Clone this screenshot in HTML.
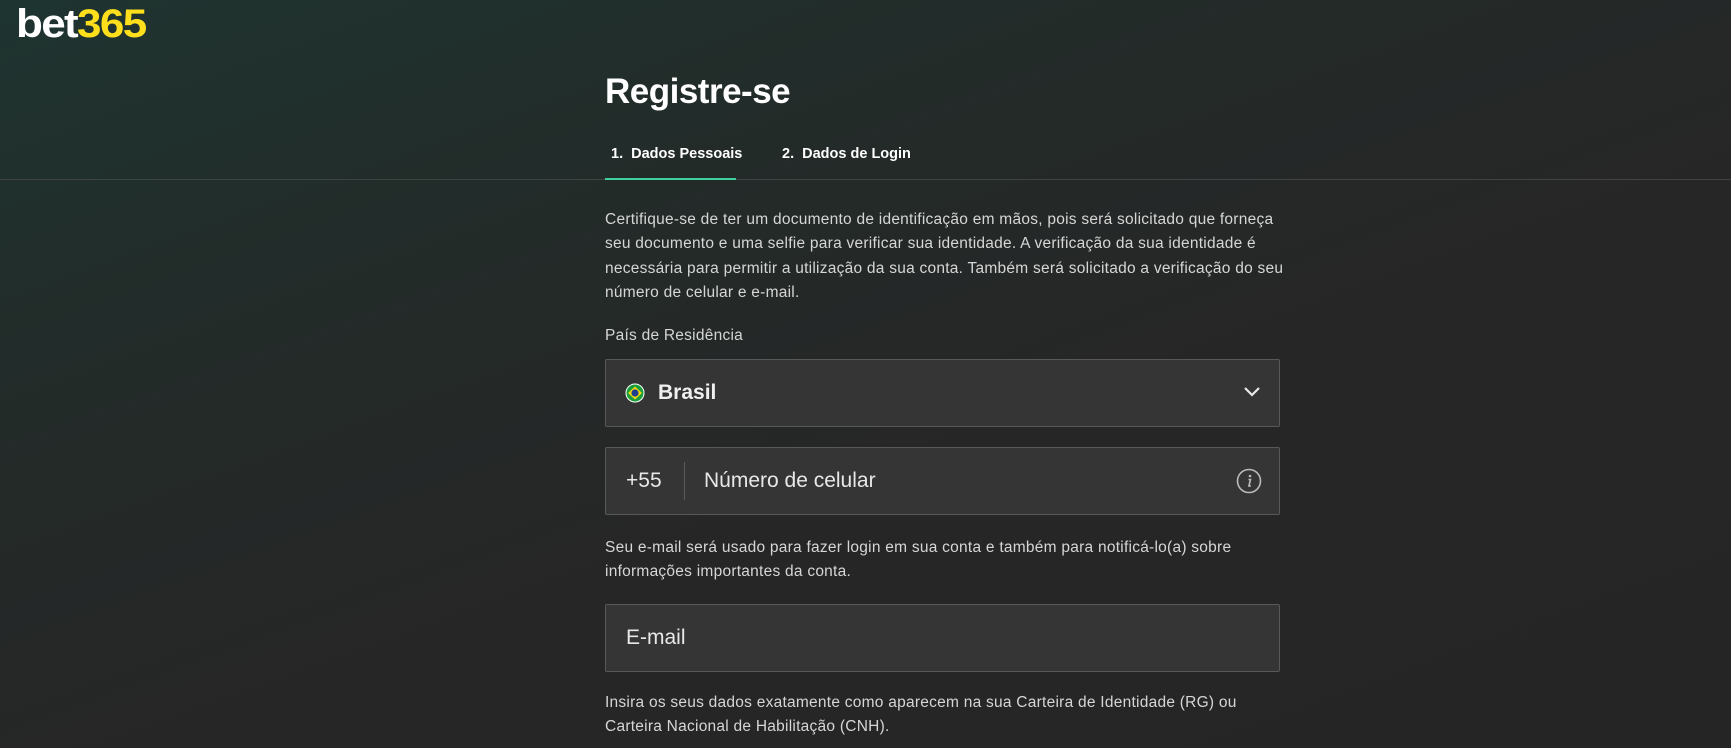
<!DOCTYPE html>
<html><head><meta charset="utf-8"><style>
html,body{margin:0;padding:0;width:1731px;height:748px;overflow:hidden}
body{background:linear-gradient(160deg,#1e3430 0%,#232b29 30%,#262626 60%,#252525 100%);font-family:"Liberation Sans",sans-serif;color:#e6e6e6;position:relative}
.logo{position:absolute;left:16px;top:2px;font-size:40px;font-weight:bold;letter-spacing:-1.5px;color:#fff;transform:scaleX(1.1);transform-origin:left}
.logo span{color:#ffdf1b}
h1{position:absolute;left:605px;top:72px;margin:0;font-size:35px;font-weight:bold;color:#fff;letter-spacing:-0.5px}
.tab{position:absolute;top:146px;font-size:14.5px;font-weight:bold;color:#fff}
.line{position:absolute;left:0;right:0;top:179px;height:1px;background:#3e4442}
.act{position:absolute;left:605px;width:131px;top:178px;height:2px;background:#3fd0a0}
.p{position:absolute;left:605px;width:682px;font-size:15.5px;letter-spacing:0.25px;line-height:24.3px;color:#d6d6d6}
.box{position:absolute;left:605px;width:673px;background:#353535;border:1px solid #585858;border-radius:2px}
.box .t{position:absolute;top:50%;transform:translateY(-50%);font-size:21px;color:#e8e8e8}
</style></head><body>
<div class="logo">bet<span>365</span></div>
<h1>Registre-se</h1>
<div class="tab" style="left:611px">1.&nbsp; Dados Pessoais</div>
<div class="tab" style="left:782px">2.&nbsp; Dados de Login</div>
<div class="line"></div><div class="act"></div>
<div class="p" style="top:208px">Certifique-se de ter um documento de identificação em mãos, pois será solicitado que forneça seu documento e uma selfie para verificar sua identidade. A verificação da sua identidade é necessária para permitir a utilização da sua conta. Também será solicitado a verificação do seu número de celular e e-mail.</div>
<div class="p" style="top:324px">País de Residência</div>
<div class="box" style="top:359px;height:66px">
 <svg style="position:absolute;left:19px;top:23px" width="20" height="20" viewBox="0 0 20 20"><circle cx="10" cy="10" r="9.5" fill="#1a9d3a"/><polygon points="10,3.5 17,10 10,16.5 3,10" fill="#f5d80f"/><circle cx="10" cy="10" r="3.6" fill="#1f3f8f"/><circle cx="10" cy="10" r="9" fill="none" stroke="#fff" stroke-width="1"/></svg>
 <div class="t" style="left:52px;font-weight:bold;font-size:21px;color:#f0f0f0">Brasil</div>
 <svg style="position:absolute;right:18px;top:26px" width="18" height="12" viewBox="0 0 18 12"><path d="M2 2 L9 9 L16 2" fill="none" stroke="#e8e8e8" stroke-width="2.2"/></svg>
</div>
<div class="box" style="top:447px;height:66px">
 <div class="t" style="left:20px">+55</div>
 <div style="position:absolute;left:78px;top:14px;width:1px;height:38px;background:#5a5a5a"></div>
 <div class="t" style="left:98px">Número de celular</div>
 <svg style="position:absolute;right:17px;top:20px" width="26" height="26" viewBox="0 0 26 26"><circle cx="13" cy="13" r="11.5" fill="none" stroke="#bbb" stroke-width="1.6"/><circle cx="14" cy="8" r="1.3" fill="#bbb"/><path d="M12.5 11.5 h2 l-1.6 6.5 h2" fill="none" stroke="#bbb" stroke-width="1.6"/></svg>
</div>
<div class="p" style="top:536px">Seu e-mail será usado para fazer login em sua conta e também para notificá-lo(a) sobre informações importantes da conta.</div>
<div class="box" style="top:604px;height:66px">
 <div class="t" style="left:20px">E-mail</div>
</div>
<div class="p" style="top:691px">Insira os seus dados exatamente como aparecem na sua Carteira de Identidade (RG) ou Carteira Nacional de Habilitação (CNH).</div>
</body></html>
